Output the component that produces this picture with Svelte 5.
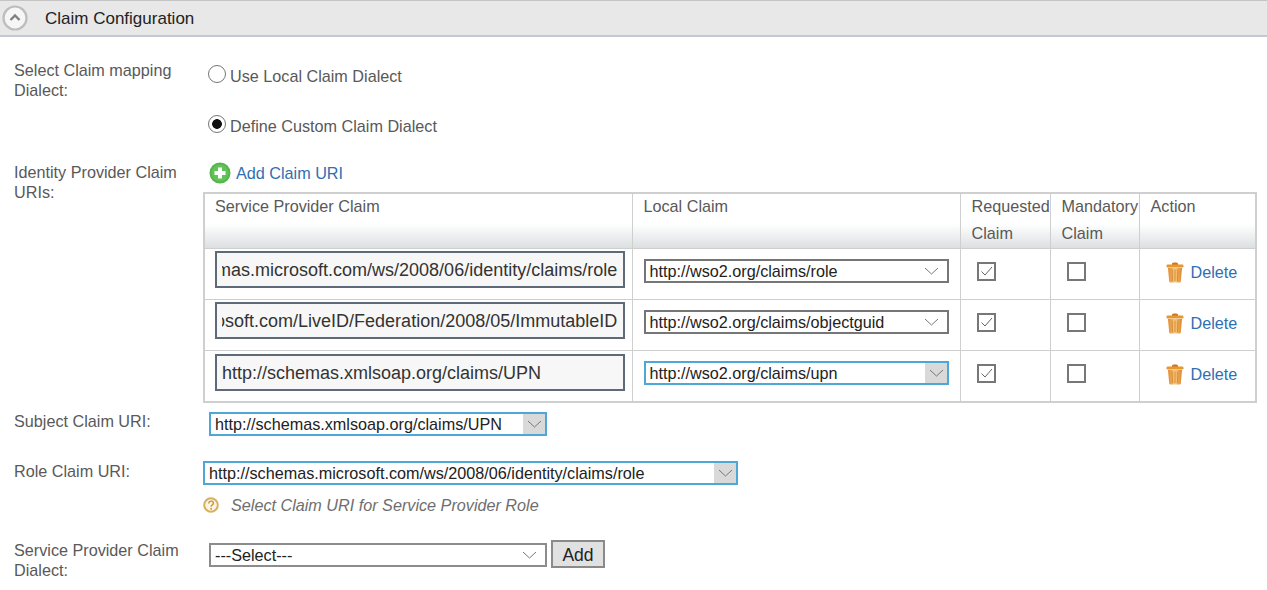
<script>
  const claims = [
    { uri: 'http://schemas.microsoft.com/ws/2008/06/identity/claims/role', local: 'http://wso2.org/claims/role' },
    { uri: 'http://schemas.microsoft.com/LiveID/Federation/2008/05/ImmutableID', local: 'http://wso2.org/claims/objectguid' },
    { uri: 'http://schemas.xmlsoap.org/claims/UPN', local: 'http://wso2.org/claims/upn', focused: true }
  ];

  // long values sit scrolled to their end, as after typing
  function toEnd(el) {
    el.scrollLeft = el.scrollWidth;
  }
</script>

{#snippet chevron()}
  <svg class="chev" viewBox="0 0 15 8" width="15" height="8"><path d="M1 1l6.5 6L14 1" fill="none" stroke="#777" stroke-width="1" /></svg>
{/snippet}

{#snippet trash()}
  <svg class="trash" viewBox="0 0 18 22" width="18" height="22">
    <defs>
      <linearGradient id="can" x1="0" x2="1" y1="0" y2="0">
        <stop offset="0" stop-color="#e08a2c" />
        <stop offset="0.5" stop-color="#f8ca80" />
        <stop offset="1" stop-color="#dd8526" />
      </linearGradient>
    </defs>
    <path d="M6 2.5C6 1 12 1 12 2.5V4H6z" fill="#c9761f" />
    <rect x="0.5" y="3.5" width="17" height="3" rx="1.2" fill="#e8962f" />
    <path d="M2 7h14l-1.2 13.5c0 .8-1 1-1.6 1H4.8c-.6 0-1.6-.2-1.6-1z" fill="url(#can)" />
    <path d="M6 8.5l.4 11.5M9 8.5V20M12 8.5l-.4 11.5" stroke="#d68a35" stroke-width="1" fill="none" />
  </svg>
{/snippet}

<div class="page">
  <div class="head">
    <svg class="collapse" viewBox="0 0 26 26" width="26" height="26">
      <circle cx="13" cy="13" r="11.5" fill="#f6f6f6" stroke="#bdbdbd" stroke-width="2.2" />
      <path d="M8.5 15l4.5-4.5 4.5 4.5" fill="none" stroke="#808080" stroke-width="2.4" />
    </svg>
    <h2>Claim Configuration</h2>
  </div>

  <div class="row first">
    <div class="label">Select Claim mapping Dialect:</div>
    <div class="radios">
      <label class="radio"><input type="radio" name="dialect" />Use Local Claim Dialect</label>
      <label class="radio"><input type="radio" name="dialect" checked />Define Custom Claim Dialect</label>
    </div>
  </div>

  <div class="row uris">
    <div class="label">Identity Provider Claim URIs:</div>
    <div class="grow">
      <a class="add" href="#add">
        <svg viewBox="0 0 22 22" width="22" height="22">
          <circle cx="11" cy="11" r="10.5" fill="#55b64a" />
          <circle cx="11" cy="11" r="8.5" fill="#62c257" />
          <path d="M11 5.5v11M5.5 11h11" stroke="#fff" stroke-width="4" />
        </svg>
        Add Claim URI
      </a>
      <table>
        <thead>
          <tr>
            <th class="c1"><span>Service Provider Claim</span></th>
            <th class="c2"><span>Local Claim</span></th>
            <th class="c3"><span>Requested Claim</span></th>
            <th class="c4"><span>Mandatory Claim</span></th>
            <th><span>Action</span></th>
          </tr>
        </thead>
        <tbody>
          {#each claims as claim}
            <tr>
              <td class="c1"><input class="text" type="text" value={claim.uri} use:toEnd /></td>
              <td>
                <span class="sel local" class:focused={claim.focused}>
                  <select><option>{claim.local}</option></select>
                  {@render chevron()}
                </span>
              </td>
              <td class="box"><input class="check" type="checkbox" checked /></td>
              <td class="box"><input class="check" type="checkbox" /></td>
              <td class="act"><a href="#delete">{@render trash()}Delete</a></td>
            </tr>
          {/each}
        </tbody>
      </table>
    </div>
  </div>

  <div class="row subject">
    <div class="label">Subject Claim URI:</div>
    <span class="sel short focused">
      <select><option>http://schemas.xmlsoap.org/claims/UPN</option></select>
      {@render chevron()}
    </span>
  </div>

  <div class="row role">
    <div class="label">Role Claim URI:</div>
    <div class="grow">
      <span class="sel wide focused">
        <select><option>http://schemas.microsoft.com/ws/2008/06/identity/claims/role</option></select>
        {@render chevron()}
      </span>
      <div class="hint">
        <svg viewBox="0 0 16 16" width="16" height="16">
          <circle cx="8" cy="8" r="6.8" fill="#fdf6e4" stroke="#d8b060" stroke-width="2" />
          <path d="M5.8 6.4c0-3 4.6-3 4.6-.2 0 1.8-2.3 1.7-2.3 3.5" fill="none" stroke="#c59a45" stroke-width="1.5" />
          <circle cx="8.1" cy="11.8" r="1" fill="#c59a45" />
        </svg>
        <em>Select Claim URI for Service Provider Role</em>
      </div>
    </div>
  </div>

  <div class="row dialect">
    <div class="label">Service Provider Claim Dialect:</div>
    <div class="pick">
      <span class="sel short plain">
        <select><option>---Select---</option></select>
        {@render chevron()}
      </span>
      <button type="button">Add</button>
    </div>
  </div>
</div>

<style>
  :global(body) {
    background: #fff;
    font-family: "Liberation Sans", Arial, sans-serif;
  }
  .page {
    font-size: 16.2px;
    line-height: 20px;
    color: #595959;
  }
  .head {
    display: flex;
    align-items: center;
    height: 34px;
    background: #e8e8e8;
    border-top: 1px solid #c4c4c4;
    border-bottom: 2px solid #c3c9d2;
    padding-left: 2px;
  }
  .head h2 {
    margin: 1px 0 0 17px;
    font-size: 17px;
    font-weight: normal;
    color: #222;
  }
  .row {
    display: flex;
    align-items: flex-start;
  }
  .label {
    width: 189px;
    padding-left: 14px;
    flex: none;
  }
  .grow {
    flex: 1;
    min-width: 0;
    padding-right: 10px;
  }
  .first {
    margin-top: 23px;
  }
  .radios {
    display: flex;
    flex-direction: column;
    gap: 30px;
    padding-left: 5px;
    margin-top: 6px;
  }
  .radio {
    display: flex;
    align-items: center;
    height: 20px;
  }
  .radio input {
    appearance: none;
    width: 18px;
    height: 18px;
    margin: -5px 4px 0 0;
    border: 1.5px solid #767676;
    border-radius: 50%;
    background: #fff;
  }
  .radio input:checked {
    background: radial-gradient(circle, #111 0 4.5px, #fff 5.2px);
  }
  .uris {
    margin-top: 26px;
  }
  .add {
    display: flex;
    align-items: center;
    gap: 5px;
    height: 22px;
    margin: 0 0 8px 6px;
    color: #2f6fb3;
    text-decoration: none;
  }
  table {
    border-collapse: collapse;
    width: 1054px;
    table-layout: fixed;
    border: 2px solid #cfcfcf;
  }
  th, td {
    box-sizing: border-box;
    border: 1px solid #cfcfcf;
    padding: 0;
  }
  th {
    height: 55px;
    padding: 0 0 0 11px;
    font-weight: normal;
    text-align: left;
    vertical-align: top;
    line-height: 27px;
    color: #595959;
    background: linear-gradient(#fff 55%, #dcdfe1);
  }
  th span {
    display: block;
    margin-top: -1px;
  }
  th.c1 { padding-left: 10px; }
  .c1 { width: 428px; }
  .c2 { width: 328px; }
  .c3 { width: 90px; }
  .c4 { width: 89px; }
  td {
    height: 51px;
    vertical-align: top;
  }
  tbody tr:last-child td {
    height: 52px;
  }
  td.c1 {
    padding: 2px 0 0 10px;
  }
  tbody tr:last-child td.c1 {
    padding-top: 3px;
  }
  .text {
    box-sizing: border-box;
    display: block;
    width: 410px;
    height: 37px;
    padding: 2px 6px 0 5px;
    border: 2px solid #5e6a78;
    background: #f7f7f7;
    font: 18px "Liberation Sans", Arial, sans-serif;
    color: #333;
    outline: none;
  }
  .sel {
    position: relative;
    display: inline-block;
    box-sizing: border-box;
    height: 24px;
    border: 2px solid #767676;
    background: #fff;
    vertical-align: top;
  }
  .sel select {
    appearance: none;
    display: block;
    width: 100%;
    height: 100%;
    padding: 0 0 0 4px;
    border: 0;
    background: transparent;
    font: 16.2px "Liberation Sans", Arial, sans-serif;
    color: #222;
    outline: none;
  }
  .chev {
    position: absolute;
    right: 8px;
    top: 6px;
    pointer-events: none;
  }
  .focused {
    border-color: #4fa6d8;
  }
  .focused::after {
    content: "";
    position: absolute;
    top: 0;
    right: 0;
    bottom: 0;
    width: 22px;
    background: #d9d9d9;
    pointer-events: none;
  }
  .focused .chev {
    z-index: 1;
    right: 3px;
  }
  .plain {
    border-color: #8c8c8c;
  }
  .local {
    width: 305px;
    margin: 10px 0 0 11px;
  }
  .box {
    padding: 13px 0 0 16px;
  }
  .check {
    appearance: none;
    display: block;
    width: 19px;
    height: 19px;
    margin: 0;
    border: 2px solid #777;
    background: #fff center / 13px 11px no-repeat;
  }
  .check:checked {
    background-image: url("data:image/svg+xml,%3Csvg xmlns='http://www.w3.org/2000/svg' viewBox='0 0 13 11'%3E%3Cpath d='M1.5 5.5l3.5 3.5 7-8' fill='none' stroke='%23666' stroke-width='1'/%3E%3C/svg%3E");
  }
  .act a {
    display: flex;
    align-items: center;
    gap: 7px;
    margin: 12px 0 0 26px;
    color: #2f6fb3;
    text-decoration: none;
  }
  .subject {
    margin-top: 9px;
  }
  .subject .label {
    width: 195px;
    margin-top: -1px;
  }
  .short {
    width: 338px;
  }
  .role {
    margin-top: 25px;
  }
  .wide {
    width: 535px;
  }
  .hint {
    display: flex;
    align-items: center;
    gap: 12px;
    margin-top: 7px;
    height: 26px;
  }
  .hint em {
    color: #6e6e6e;
  }
  .dialect {
    margin-top: 22px;
  }
  .dialect .label {
    width: 195px;
  }
  .pick {
    display: flex;
    align-items: center;
    gap: 4px;
  }
  .pick .sel {
    margin-top: 1px;
  }
  .pick button {
    box-sizing: border-box;
    width: 54px;
    height: 28px;
    padding: 2px 0 0;
    border: 2px solid #8a8a8a;
    background: #e1e1e1;
    font: 17.5px "Liberation Sans", Arial, sans-serif;
    color: #222;
  }
</style>
